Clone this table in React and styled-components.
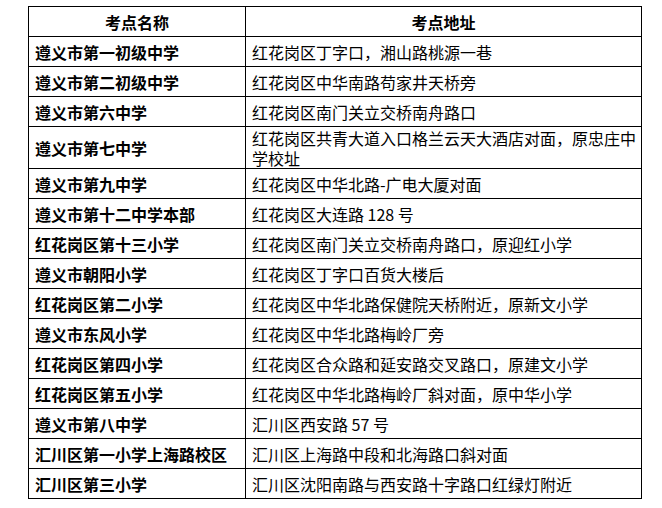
import styled, { createGlobalStyle } from 'styled-components'

const GlobalStyle = createGlobalStyle`
  body {
    margin: 0;
    background: #ffffff;
    font-family: "Noto Sans CJK SC", "Noto Sans", sans-serif;
    color: #000000;
  }
`

const rows = [
  ['遵义市第一初级中学', '红花岗区丁字口，湘山路桃源一巷'],
  ['遵义市第二初级中学', '红花岗区中华南路苟家井天桥旁'],
  ['遵义市第六中学', '红花岗区南门关立交桥南舟路口'],
  ['遵义市第七中学', '红花岗区共青大道入口格兰云天大酒店对面，原忠庄中学校址'],
  ['遵义市第九中学', '红花岗区中华北路-广电大厦对面'],
  ['遵义市第十二中学本部', '红花岗区大连路 128 号'],
  ['红花岗区第十三小学', '红花岗区南门关立交桥南舟路口，原迎红小学'],
  ['遵义市朝阳小学', '红花岗区丁字口百货大楼后'],
  ['红花岗区第二小学', '红花岗区中华北路保健院天桥附近，原新文小学'],
  ['遵义市东风小学', '红花岗区中华北路梅岭厂旁'],
  ['红花岗区第四小学', '红花岗区合众路和延安路交叉路口，原建文小学'],
  ['红花岗区第五小学', '红花岗区中华北路梅岭厂斜对面，原中华小学'],
  ['遵义市第八中学', '汇川区西安路 57 号'],
  ['汇川区第一小学上海路校区', '汇川区上海路中段和北海路口斜对面'],
  ['汇川区第三小学', '汇川区沈阳南路与西安路十字路口红绿灯附近'],
]

const App = () => {
  return (
    <Page>
      <GlobalStyle />
      <Table>
        <colgroup>
          <col style={{ width: 217 }} />
          <col />
        </colgroup>
        <thead>
          <tr>
            <HeadCell>考点名称</HeadCell>
            <HeadCell>考点地址</HeadCell>
          </tr>
        </thead>
        <tbody>
          {rows.map(([name, addr]) => (
            <tr key={name}>
              <NameCell>{name}</NameCell>
              <AddrCell>{addr}</AddrCell>
            </tr>
          ))}
        </tbody>
      </Table>
    </Page>
  )
}

//Style-------------------------------------------------------------------------

const Page = styled.div`
  padding: 6px 0 0 28px;
`

const Table = styled.table`
  border-collapse: collapse;
  table-layout: fixed;
  width: 614px;
  font-size: 16px;
  line-height: 20px;
`

const Cell = styled.td`
  border: 1px solid #000000;
  height: 30px;
  padding: 0 6px;
  box-sizing: border-box;
  vertical-align: middle;
`

const HeadCell = styled(Cell).attrs({ as: 'th' })`
  font-weight: bold;
  text-align: center;
`

const NameCell = styled(Cell)`
  font-weight: bold;
  white-space: nowrap;
`

const AddrCell = styled(Cell)`
  padding: 1px 3px 0 6px;
`

export default App
